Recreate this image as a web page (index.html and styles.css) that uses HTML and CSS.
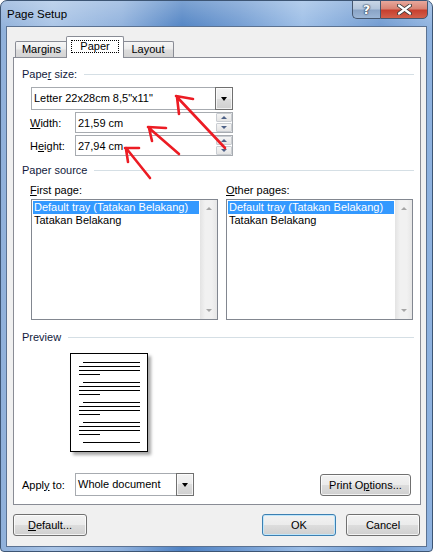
FILE: index.html
```
<!DOCTYPE html>
<html lang="en">
<head>
    <meta charset="UTF-8">
    <title>Page Setup</title>
    <link rel="stylesheet" href="styles.css">
</head>
<body>

    <div class="window">
        <!-- title bar -->
        <div class="titlebar">
            <span class="title">Page Setup</span>
            <div class="caps">
                <div class="cap help">?</div>
                <div class="cap close">
                    <svg width="15" height="11" viewBox="0 0 15 11">
                        <path d="M2 1.5 L13 9.5 M13 1.5 L2 9.5" stroke="#3a3a3a" stroke-width="4" stroke-linecap="round"/>
                        <path d="M2 1.5 L13 9.5 M13 1.5 L2 9.5" stroke="#fff" stroke-width="2.2" stroke-linecap="round"/>
                    </svg>
                </div>
            </div>
        </div>

        <div class="client">
            <div class="tabs">
                <div class="tab tab-margins">Margins</div>
                <div class="tab tab-paper active"><span class="focus">Paper</span></div>
                <div class="tab tab-layout">Layout</div>
            </div>

            <div class="panel">
                <div class="group-head"><span>Pape<u>r</u> size:</span></div>
                <div class="combo combo-size">
                    <span class="combo-text">Letter 22x28cm 8,5"x11"</span>
                    <span class="drop"><i class="tri-down"></i></span>
                </div>

                <div class="field-row">
                    <span class="field-label"><u>W</u>idth:</span>
                    <div class="textbox">
                        <span>21,59 cm</span>
                        <div class="spin"><span class="spin-btn"><i class="tri-up"></i></span><span class="spin-btn"><i class="tri-dn"></i></span></div>
                    </div>
                </div>
                <div class="field-row">
                    <span class="field-label">H<u>e</u>ight:</span>
                    <div class="textbox">
                        <span>27,94 cm</span>
                        <div class="spin"><span class="spin-btn"><i class="tri-up"></i></span><span class="spin-btn"><i class="tri-dn"></i></span></div>
                    </div>
                </div>

                <div class="group-head gh-source"><span>Paper source</span></div>
                <div class="sources">
                    <div class="source">
                        <div class="list-label"><u>F</u>irst page:</div>
                        <div class="listbox">
                            <div class="items">
                                <div class="item selected">Default tray (Tatakan Belakang)</div>
                                <div class="item">Tatakan Belakang</div>
                            </div>
                            <div class="vscroll"><span class="sarrow"><i class="s-up"></i></span><span class="sarrow"><i class="s-dn"></i></span></div>
                        </div>
                    </div>
                    <div class="source">
                        <div class="list-label"><u>O</u>ther pages:</div>
                        <div class="listbox">
                            <div class="items">
                                <div class="item selected">Default tray (Tatakan Belakang)</div>
                                <div class="item">Tatakan Belakang</div>
                            </div>
                            <div class="vscroll"><span class="sarrow"><i class="s-up"></i></span><span class="sarrow"><i class="s-dn"></i></span></div>
                        </div>
                    </div>
                </div>

                <div class="group-head gh-preview"><span>Preview</span></div>
                <div class="page">
                    <svg width="76" height="97" viewBox="0 0 76 97" shape-rendering="crispEdges">
                        <g fill="#000">
                            <rect x="12" y="8" width="57" height="1"/>
                            <rect x="8" y="12" width="61" height="1"/>
                            <rect x="8" y="16" width="61" height="1"/>
                            <rect x="8" y="20" width="21" height="1"/>
                            <rect x="12" y="28" width="57" height="1"/>
                            <rect x="8" y="32" width="61" height="1"/>
                            <rect x="8" y="36" width="61" height="1"/>
                            <rect x="8" y="40" width="21" height="1"/>
                            <rect x="12" y="48" width="57" height="1"/>
                            <rect x="8" y="52" width="61" height="1"/>
                            <rect x="8" y="56" width="61" height="1"/>
                            <rect x="8" y="60" width="21" height="1"/>
                            <rect x="12" y="68" width="57" height="1"/>
                            <rect x="8" y="72" width="61" height="1"/>
                            <rect x="8" y="76" width="61" height="1"/>
                            <rect x="8" y="80" width="21" height="1"/>
                            <rect x="12" y="88" width="57" height="1"/>
                        </g>
                    </svg>
                </div>

                <div class="apply-row">
                    <span class="apply-label">Appl<u>y</u> to:</span>
                    <div class="combo combo-apply">
                        <span class="combo-text">Whole document</span>
                        <span class="drop"><i class="tri-down"></i></span>
                    </div>
                    <button class="btn btn-print">Print O<u>p</u>tions...</button>
                </div>
            </div>

            <div class="buttons">
                <button class="btn"><u>D</u>efault...</button>
                <div class="spacer"></div>
                <button class="btn btn-ok">OK</button>
                <button class="btn btn-cancel">Cancel</button>
            </div>
        </div>

        <!-- red arrows drawn over the dialog -->
        <svg class="marks" width="433" height="552" viewBox="0 0 433 552">
            <g stroke="#ec1c24" stroke-width="2.6" stroke-linecap="round" fill="none">
                <path d="M177 97 L225 148 M176 96 L193 99 M177 97 L179 114"/>
                <path d="M149 128 L179 154 M148 127 L166 128 M149 128 L152 141"/>
                <path d="M126 148 L150 178 M125 148 L139 148 M126 149 L128 162"/>
            </g>
        </svg>
    </div>

</body>
</html>
```

FILE: styles.css
```
* {
    box-sizing: border-box;
}

body {
    margin: 0;
    background: #fff;
    font-family: "Liberation Sans", Arial, sans-serif;
    font-size: 11px;
    color: #000;
}

u {
    text-decoration: underline;
    text-underline-offset: 1px;
}

/* window frame */
.window {
    position: relative;
    width: 433px;
    height: 552px;
    border: 1px solid #3d5574;
    border-radius: 7px 7px 4px 4px;
    padding: 0 5px 4px 5px;
    display: flex;
    flex-direction: column;
    background:
        linear-gradient(rgba(255, 255, 255, 0.25), rgba(255, 255, 255, 0) 30px),
        linear-gradient(90deg, #8fb0da 0%, #a9c4e6 12%, #8eb0dc 28%, #4f82c3 42%, #6f9ad1 55%, #9bbde6 70%, #6e99d0 88%, #8fb3e0 100%);
    overflow: hidden;
}

.titlebar {
    height: 25px;
    display: flex;
    justify-content: space-between;
    align-items: flex-start;
}

.title {
    padding: 6px 0 0 1px;
    line-height: 14px;
    font-size: 11.5px;
}

.caps {
    display: flex;
    margin-right: -1px;
    margin-top: -1px;
}

.cap {
    height: 19px;
    border: 1px solid #46576f;
    display: flex;
    align-items: center;
    justify-content: center;
}

.help {
    width: 28px;
    border-right: none;
    border-radius: 0 0 0 5px;
    background: linear-gradient(#c9d6e6, #b3c5db 45%, #8aa4c6 55%, #9cb6d6);
    color: #fff;
    font-weight: bold;
    font-size: 13px;
    font-family: "DejaVu Sans", sans-serif;
    text-shadow: 0 0 1px #2b3a50, 0 0 1px #2b3a50, 0 0 2px #2b3a50;
}

.close {
    width: 48px;
    border-radius: 0 0 5px 0;
    background: linear-gradient(#e8a89c, #d98474 45%, #c7402f 55%, #d2604b);
}

.client {
    flex: 1;
    background: #f0f0f0;
    border: 1px solid #5b7292;
    padding: 9px 5px 10px 6px;
    display: flex;
    flex-direction: column;
}

/* tabs */
.tabs {
    height: 21px;
    display: flex;
    align-items: flex-end;
    padding-left: 2px;
}

.tab {
    height: 16px;
    border: 1px solid #898c95;
    border-bottom: none;
    border-radius: 2px 2px 0 0;
    background: linear-gradient(#f6f6f6, #ececec 45%, #dcdcdc 55%, #d4d4d4);
    display: flex;
    align-items: center;
    justify-content: center;
    line-height: 13px;
}

.tab-margins {
    width: 53px;
}

.tab-paper {
    width: 58px;
}

.tab-layout {
    width: 52px;
}

.tab.active {
    position: relative;
    z-index: 1;
    height: 22px;
    margin: 0 -2px -1px -2px;
    background: #fff;
    align-items: flex-start;
    padding-top: 3px;
}

.focus {
    border: 1px dotted #000;
    padding: 0 8px;
    line-height: 11px;
}

.panel {
    height: 448px;
    border: 1px solid #898c95;
    background: #fff;
    padding: 0 6px 0 8px;
}

.group-head {
    height: 14px;
    margin-top: 9px;
    display: flex;
    align-items: center;
    gap: 7px;
    line-height: 14px;
    color: #111a3c;
}

.group-head::after {
    content: "";
    flex: 1;
    height: 1px;
    background: #d5dfe5;
}

.gh-source {
    margin-top: 7px;
}

.gh-preview {
    margin-top: 10px;
}

/* drop-down boxes */
.combo {
    display: flex;
    height: 23px;
    border: 1px solid #a7abb0;
    border-right: none;
    background: #fff;
}

.combo-size {
    width: 202px;
    margin: 6px 0 0 9px;
}

.combo-text {
    flex: 1;
    padding-left: 2px;
    line-height: 21px;
}

.drop {
    width: 18px;
    margin: -1px 0;
    border: 1px solid #707070;
    background: linear-gradient(#f3f3f3, #ebebeb 50%, #dddddd 50%, #cfcfcf);
    box-shadow: inset 0 0 0 1px rgba(255, 255, 255, 0.7);
    display: flex;
    align-items: center;
    justify-content: center;
}

.tri-down {
    width: 0;
    height: 0;
    border-left: 3.5px solid transparent;
    border-right: 3.5px solid transparent;
    border-top: 4px solid #000;
}

.field-row {
    display: flex;
    align-items: center;
    height: 21px;
    margin-top: 2px;
}

.field-label {
    width: 45px;
    margin-left: 8px;
}

.textbox {
    width: 158px;
    height: 21px;
    border: 1px solid #a7abb0;
    display: flex;
    justify-content: space-between;
    align-items: center;
    padding-left: 2px;
}

.spin {
    display: flex;
    flex-direction: column;
    gap: 1px;
    align-self: stretch;
}

.spin-btn {
    width: 16px;
    height: 9px;
    border: 1px solid #c9cdd2;
    border-radius: 1px;
    background: linear-gradient(#f5f5f5, #e4e4e4);
    display: flex;
    align-items: center;
    justify-content: center;
}

.tri-up,
.tri-dn {
    width: 0;
    height: 0;
    border-left: 3.5px solid transparent;
    border-right: 3.5px solid transparent;
}

.tri-up {
    border-bottom: 3px solid #4d6187;
}

.tri-dn {
    border-top: 3px solid #4d6187;
}

/* paper source lists */
.sources {
    display: grid;
    grid-template-columns: 187px 187px;
    column-gap: 9px;
    margin: 6px 0 0 8px;
}

.list-label {
    height: 14px;
    line-height: 14px;
    margin-bottom: 2px;
}

.source:first-child .listbox {
    margin-left: 1px;
}

.source:first-child {
    margin-right: -1px;
}

.listbox {
    height: 121px;
    border: 1px solid #828790;
    padding: 1px 0 1px 1px;
    display: flex;
}

.items {
    flex: 1;
}

.item {
    height: 13px;
    line-height: 13px;
    padding-left: 1px;
    white-space: nowrap;
}

.item.selected {
    background: #3399ff;
    color: #fff;
}

.vscroll {
    width: 17px;
    margin: -1px 0 -1px 1px;
    background: linear-gradient(90deg, #e3e3e3, #f1f1f1 30%, #f1f1f1 70%, #e6e6e6);
    display: flex;
    flex-direction: column;
    justify-content: space-between;
}

.sarrow {
    height: 17px;
    display: flex;
    align-items: center;
    justify-content: center;
}

.s-up,
.s-dn {
    width: 0;
    height: 0;
    border-left: 3.5px solid transparent;
    border-right: 3.5px solid transparent;
}

.s-up {
    border-bottom: 3px solid #a6a6a6;
}

.s-dn {
    border-top: 3px solid #a6a6a6;
}

/* preview page */
.page {
    width: 78px;
    height: 99px;
    margin: 9px 0 0 48px;
    border: 1px solid #000;
    background: #fff;
    box-shadow: 3px 3px 3px rgba(0, 0, 0, 0.35);
}

.page svg {
    display: block;
}

.apply-row {
    display: flex;
    align-items: center;
    margin-top: 21px;
    height: 23px;
}

.apply-label {
    width: 53px;
}

.combo-apply {
    width: 119px;
}

/* push buttons */
.btn {
    height: 22px;
    border: 1px solid #707070;
    border-radius: 3px;
    background: linear-gradient(#f2f2f2, #ebebeb 50%, #dddddd 50%, #cfcfcf);
    box-shadow: inset 0 0 0 1px rgba(255, 255, 255, 0.75);
    font-family: inherit;
    font-size: 11px;
    color: #000;
    padding: 0;
    width: 74px;
}

.btn-print {
    width: 91px;
    margin: 0 3px 0 auto;
    height: 22px;
}

.buttons {
    display: flex;
    margin-top: 9px;
    padding-right: 1px;
}

.spacer {
    flex: 1;
}

.btn-ok {
    border-color: #3c7fb1;
    box-shadow: inset 0 0 0 1px #bfe6fb;
    margin-right: 10px;
}

.marks {
    position: absolute;
    top: -1px;
    left: -1px;
    pointer-events: none;
}
```
